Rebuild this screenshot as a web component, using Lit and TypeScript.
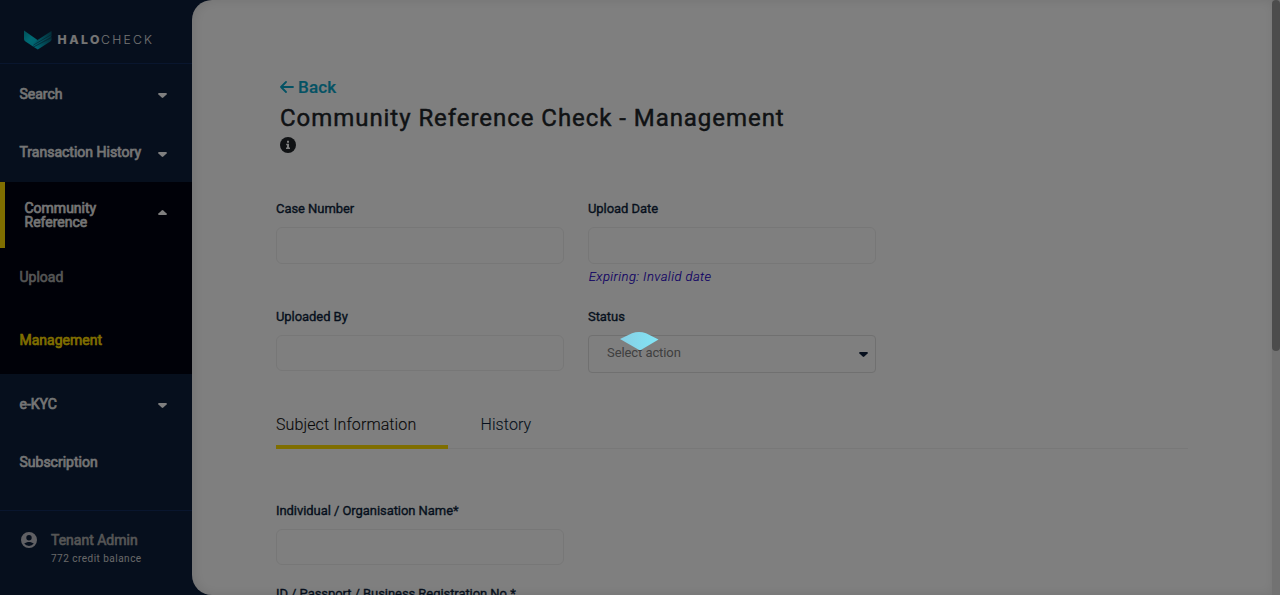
import { LitElement, html, css, svg } from "lit";
import { customElement } from "lit/decorators.js";

const caretDown = svg`<path d="M1 0H8Q9.6 .2 8.6 1.5L5.3 4.6Q4.5 5.2 3.7 4.6L.4 1.5Q-.6 .2 1 0Z"/>`;
const caretUp = svg`<path d="M1 5H8Q9.6 4.8 8.6 3.5L5.3 .4Q4.5 -.2 3.7 .4L.4 3.5Q-.6 4.8 1 5Z"/>`;

@customElement("app-sidebar")
export class AppSidebar extends LitElement {
  static styles = css`
    :host { display: flex; flex-direction: column; width: 192px; height: 595px; flex: none; color: #eaeaea; font: 400 14px/14px Roboto, sans-serif; -webkit-text-stroke: .65px currentColor; letter-spacing: 0; }
    .brand { height: 63px; flex: none; border-bottom: 1px solid #122c5c; -webkit-text-stroke: 0; }
    .brand svg { display: block; }
    .name { font: 300 12.2px Inter, sans-serif; fill: #e8e8e8; }
    .heavy { font-weight: 800; }
    .row { display: flex; align-items: center; justify-content: space-between; height: 58px; padding: 0 25.5px 0 19.5px; box-sizing: border-box; }
    .caret { width: 9px; height: 5px; fill: #fff; overflow: visible; flex: none; margin-top: 3px; }
    .low .caret { margin-top: 5px; }
    .group { background: #000310; margin-top: 1px; height: 192.5px; box-sizing: border-box; }
    .open { height: 66px; border-left: 5px solid #fd0; padding: 0 25px 0 19.5px; }
    .open .caret { margin-top: -4px; }
    .sub { height: 63px; display: flex; align-items: center; padding: 0 19.5px 4px; box-sizing: border-box; color: #aaa; }
    .current { color: #fd0; }
    .first { margin-top: .5px; }
    .after { margin-top: .5px; }
    .user { display: flex; margin-top: auto; height: 85px; border-top: 1px solid #122c5c; box-sizing: border-box; padding: 21px 0 0 21px; gap: 14px; color: #aaa; }
    .avatar { width: 16px; height: 16px; fill: #c0c0c8; }
    .who { display: flex; flex-direction: column; gap: 5px; margin-top: 1px; }
    .credit { font-weight: 400; font-size: 10px; letter-spacing: .48px; color: #d0d0d0; -webkit-text-stroke: 0; }
  `;

  row(label: string, extra = "", hasCaret = true) {
    return html`<div class="row ${extra}"><span>${label}</span>${hasCaret ? html`<svg class="caret" viewBox="0 0 9 5">${caretDown}</svg>` : ""}</div>`;
  }

  render() {
    return html`
      <div class="brand">
        <svg width="192" height="63" viewBox="0 0 192 63">
          <defs>
            <linearGradient id="left" x1="0" y1="0" x2="1" y2="1"><stop offset="0" stop-color="#009fb0"/><stop offset=".5" stop-color="#00d4e8"/><stop offset="1" stop-color="#00c4da"/></linearGradient>
            <linearGradient id="right" x1="0" y1="1" x2="1" y2="0"><stop offset="0" stop-color="#00d6f0"/><stop offset="1" stop-color="#075a70"/></linearGradient>
          </defs>
          <path d="M24 30.500L37.500 40L33 46.500L25.500 41.500Q24 40.500 24 39Z" fill="url(#left)"/>
          <path d="M37.500 40L51.500 31V35.500Q51.500 36.500 50 37.500L35 46.500L32 44.500Z" fill="url(#right)"/>
          <path d="M33 46.400L51.500 36.500V39.500Q51.500 40.600 50.300 41.400L37.800 49.500Z" fill="url(#right)"/>
          <path d="M33.500 45L51.500 34.500M34 46.700L51.500 37.500" stroke="#0a3450" stroke-width=".6" fill="none"/>
          <text class="name heavy" x="57.500" y="44" textLength="42">HALO</text>
          <text class="name" x="101" y="44" textLength="51">CHECK</text>
        </svg>
      </div>
      ${this.row("Search", "first")}
      ${this.row("Transaction History", "low")}
      <div class="group">
        <div class="row open"><span>Community<br />Reference</span><svg class="caret" viewBox="0 0 9 5">${caretUp}</svg></div>
        <div class="sub">Upload</div>
        <div class="sub current">Management</div>
      </div>
      ${this.row("e-KYC", "after")}
      ${this.row("Subscription", "", false)}
      <div class="user">
        <svg class="avatar" viewBox="0 0 16 16"><path fill-rule="evenodd" d="M8 0a8 8 0 1 0 0 16A8 8 0 0 0 8 0ZM8 3a2.7 2.7 0 1 1 0 5.4A2.7 2.7 0 0 1 8 3ZM3.2 11.6C4.3 10.4 6.5 9.9 8 9.9s3.700.5 4.800 1.700A6 6 0 0 1 8 14a6 6 0 0 1-4.800-2.400Z"/></svg>
        <div class="who"><span>Tenant Admin</span><span class="credit">772 credit balance</span></div>
      </div>`;
  }
}

@customElement("app-root")
export class AppRoot extends LitElement {
  static styles = css`
    :host { display: flex; position: relative; width: 1280px; height: 595px; overflow: hidden; background: #0d1f3b; font-family: Roboto, sans-serif; color: #0d1f3b; }
    .main { width: 1080px; height: 595px; box-sizing: border-box; padding: 76px 84px 0; background: #fff; border-radius: 20px 0 0 20px; box-shadow: inset 2px 0 12px rgba(0, 0, 0, .1); overflow: hidden; }
    .track { width: 8px; background: #e4e4e4; }
    .thumb { height: 351px; border-radius: 4px; background: #999; }
    .back { display: flex; align-items: center; gap: 4px; height: 22px; padding-left: 4px; font: 500 17px/22px Roboto, sans-serif; letter-spacing: .15px; color: #08a5c8; -webkit-text-stroke: .2px currentColor; }
    .arrow { width: 14px; height: 12px; fill: none; stroke: currentColor; stroke-width: 1.8; stroke-linecap: round; stroke-linejoin: round; }
    .title { margin: 5px 0 0 4px; font: 400 24px/30px Roboto, sans-serif; letter-spacing: .95px; color: #212529; white-space: nowrap; height: 30px; -webkit-text-stroke: .45px currentColor; }
    .info { display: block; width: 16px; height: 16px; margin: 4px 0 0 4px; }
    .fields { display: grid; grid-template-columns: 288px 288px; column-gap: 24px; margin-top: 48px; grid-auto-rows: 108px; }
    .label { height: 16px; font: 400 13px/16px Roboto, sans-serif; letter-spacing: -.06px; -webkit-text-stroke: .35px currentColor; white-space: nowrap; }
    .box { box-sizing: border-box; width: 288px; height: 37px; margin-top: 10px; border: 1px solid #eee; border-radius: 6px; }
    .expiry { font: italic 300 13px/16px Roboto, sans-serif; letter-spacing: .44px; color: #2200c8; margin: 5px 0 0 .7px; -webkit-text-stroke: .15px currentColor; }
    .tight { height: 36px; }
    .select { height: 38px; border-color: #e0e0e0; border-radius: 4px; padding: 0 7px 2px 18px; display: flex; align-items: center; justify-content: space-between; font: 400 13px/16px Roboto, sans-serif; color: #808080; letter-spacing: -.08px; }
    .caret { width: 9px; height: 5px; fill: #0d1f3b; overflow: visible; margin-top: 3px; }
    .tabs { display: flex; width: 912px; height: 40px; margin-top: -8px; box-shadow: inset 0 -1px #f0f0f0; font: 300 16px/32px Roboto, sans-serif; letter-spacing: .1px; }
    .tab { box-sizing: border-box; width: 172px; height: 40px; -webkit-text-stroke: .12px currentColor; }
    .on { border-bottom: 4px solid #fd0; color: #111; }
    .history { padding-left: 32.5px; }
    .subject { display: flex; flex-direction: column; margin-top: 54px; }
    .next { margin-top: 21px; }
    .overlay { position: absolute; inset: 0; background: rgba(0, 0, 0, .5); }
    .loader { position: absolute; left: 620px; top: 332px; width: 39px; height: 18px; }
  `;

  render() {
    return html`
      <app-sidebar></app-sidebar>
      <div class="main">
        <div class="back"><svg class="arrow" viewBox="0 0 14 12"><path d="M13 6H1M6 1L1 6L6 11"/></svg><span>Back</span></div>
        <div class="title">Community Reference Check - Management</div>
        <svg class="info" viewBox="0 0 16 16"><circle cx="8" cy="8" r="8" fill="#212529"/><path fill="#fff" d="M7 3.700h2v2H7ZM6.200 6.700H9v3.800h1V12H6v-1.500h1V8.200h-.8Z"/></svg>
        <div class="fields">
          <div><div class="label">Case Number</div><div class="box"></div></div>
          <div><div class="label">Upload Date</div><div class="box"></div><div class="expiry">Expiring: Invalid date</div></div>
          <div><div class="label">Uploaded By</div><div class="box tight"></div></div>
          <div><div class="label">Status</div><div class="box select"><span>Select action</span><svg class="caret" viewBox="0 0 9 5">${caretDown}</svg></div></div>
        </div>
        <div class="tabs"><div class="tab on">Subject Information</div><div class="tab history">History</div></div>
        <div class="subject">
          <div class="label">Individual / Organisation Name*</div><div class="box tight"></div>
          <div class="label next">ID / Passport / Business Registration No.*</div>
        </div>
      </div>
      <div class="track"><div class="thumb"></div></div>
      <div class="overlay"></div>
      <svg class="loader" viewBox="0 0 39 18">
        <defs><linearGradient id="glow" x1="0" x2="1"><stop offset="0" stop-color="#87cfe4"/><stop offset="1" stop-color="#82e5f6"/></linearGradient></defs>
        <path d="M0 7L12 1.200Q19-1.200 26 1.200L38.500 7.500L20 18.500Z" fill="url(#glow)"/>
      </svg>`;
  }
}
